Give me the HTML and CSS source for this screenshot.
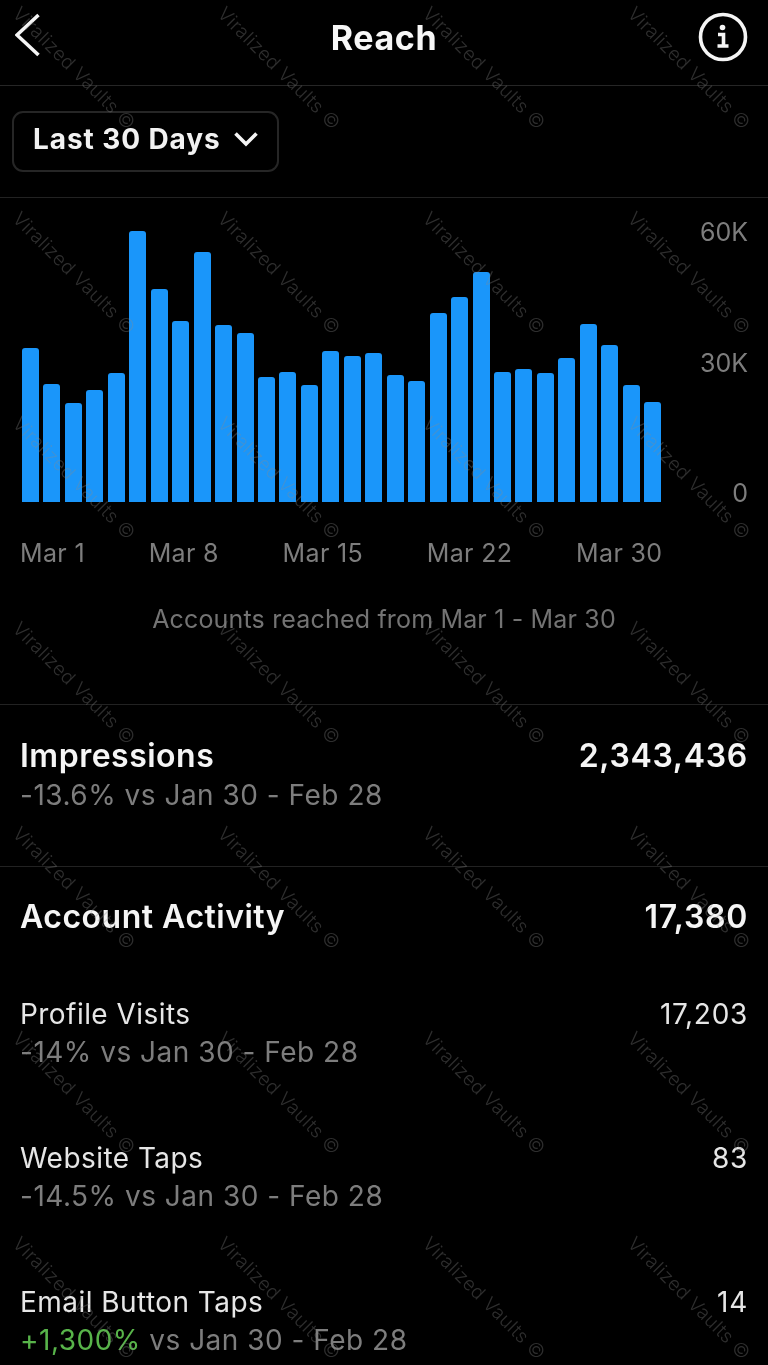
FILE: index.html
```html
<!DOCTYPE html>
<html lang="en">
<head>
<meta charset="utf-8">
<title>Reach</title>
<link rel="stylesheet" href="styles.css">
</head>
<body>
<div class="app">
  <header class="header">
    <svg class="icon back" viewBox="0 0 30 48" width="30" height="48"><path d="M23.500 2 L2 22 L23.500 42"/></svg>
    <h1 class="title">Reach</h1>
    <svg class="icon info" viewBox="0 0 50 50" width="50" height="50"><circle cx="25" cy="25" r="22.500"/><circle class="dot" cx="24.500" cy="15.500" r="2.800"/><path d="M20 22.500 H25.500 V33.500 M19.500 34 H30.500"/></svg>
  </header>
  <section class="filter">
    <button class="range">Last 30 Days<svg class="icon chevron" viewBox="0 0 26 16" width="26" height="16"><path d="M2.500 2.500 L13 13 L23.500 2.500"/></svg></button>
  </section>
  <section class="chart">
    <div class="plot">
      <div class="bars">
        <i class="bar" style="height:154px"></i><i class="bar" style="height:118px"></i><i class="bar" style="height:99px"></i><i class="bar" style="height:112px"></i><i class="bar" style="height:129px"></i><i class="bar" style="height:271px"></i><i class="bar" style="height:213px"></i><i class="bar" style="height:181px"></i><i class="bar" style="height:250px"></i><i class="bar" style="height:177px"></i><i class="bar" style="height:169px"></i><i class="bar" style="height:125px"></i><i class="bar" style="height:130px"></i><i class="bar" style="height:117px"></i><i class="bar" style="height:151px"></i><i class="bar" style="height:146px"></i><i class="bar" style="height:149px"></i><i class="bar" style="height:127px"></i><i class="bar" style="height:121px"></i><i class="bar" style="height:189px"></i><i class="bar" style="height:205px"></i><i class="bar" style="height:230px"></i><i class="bar" style="height:130px"></i><i class="bar" style="height:133px"></i><i class="bar" style="height:129px"></i><i class="bar" style="height:144px"></i><i class="bar" style="height:178px"></i><i class="bar" style="height:157px"></i><i class="bar" style="height:117px"></i><i class="bar" style="height:100px"></i>
      </div>
      <div class="yaxis"><span>60K</span><span>30K</span><span>0</span></div>
    </div>
    <div class="xaxis"><span>Mar 1</span><span>Mar 8</span><span>Mar 15</span><span>Mar 22</span><span>Mar 30</span></div>
    <p class="caption">Accounts reached from Mar 1 - Mar 30</p>
  </section>
  <section class="impressions">
    <div class="row"><span class="heading">Impressions</span><span class="heading value">2,343,436</span></div>
    <p class="sub">-13.6% vs Jan 30 - Feb 28</p>
  </section>
  <section class="activity">
    <div class="row"><span class="heading">Account Activity</span><span class="heading value">17,380</span></div>
    <div class="metric">
      <div class="row"><span class="label">Profile Visits</span><span class="label value">17,203</span></div>
      <p class="sub">-14% vs Jan 30 - Feb 28</p>
    </div>
    <div class="metric">
      <div class="row"><span class="label">Website Taps</span><span class="label value">83</span></div>
      <p class="sub">-14.5% vs Jan 30 - Feb 28</p>
    </div>
    <div class="metric">
      <div class="row"><span class="label">Email Button Taps</span><span class="label value">14</span></div>
      <p class="sub"><span class="up">+1,300%</span> vs Jan 30 - Feb 28</p>
    </div>
  </section>
  <div class="marks" aria-hidden="true">
    <span>Viralized Vaults ©</span><span>Viralized Vaults ©</span><span>Viralized Vaults ©</span><span>Viralized Vaults ©</span>
    <span>Viralized Vaults ©</span><span>Viralized Vaults ©</span><span>Viralized Vaults ©</span><span>Viralized Vaults ©</span>
    <span>Viralized Vaults ©</span><span>Viralized Vaults ©</span><span>Viralized Vaults ©</span><span>Viralized Vaults ©</span>
    <span>Viralized Vaults ©</span><span>Viralized Vaults ©</span><span>Viralized Vaults ©</span><span>Viralized Vaults ©</span>
    <span>Viralized Vaults ©</span><span>Viralized Vaults ©</span><span>Viralized Vaults ©</span><span>Viralized Vaults ©</span>
    <span>Viralized Vaults ©</span><span>Viralized Vaults ©</span><span>Viralized Vaults ©</span><span>Viralized Vaults ©</span>
    <span>Viralized Vaults ©</span><span>Viralized Vaults ©</span><span>Viralized Vaults ©</span><span>Viralized Vaults ©</span>
  </div>
</div>
</body>
</html>
```
FILE: styles.css
```css
* { box-sizing: border-box; }
html, body { margin: 0; padding: 0; background: #000; }
.app {
  position: relative;
  width: 768px;
  height: 1365px;
  overflow: hidden;
  background: #000;
  color: #f2f2f2;
  font-family: Inter, "Liberation Sans", sans-serif;
  filter: blur(0.45px);
}
.icon { display: block; fill: none; stroke: #f5f5f5; stroke-width: 3.6; }
.icon .dot { fill: #f5f5f5; stroke: none; }
.header {
  display: grid;
  grid-template-columns: 1fr auto 1fr;
  align-items: center;
  height: 86px;
  padding: 0 20px 9px;
  border-bottom: 1px solid #262626;
}
.back { width: 30px; margin: 0 0 2px -5px; }
.info { justify-self: end; margin-bottom: 2px; }
.title { margin: 0; font-size: 34px; font-weight: 650; letter-spacing: 0.6px; line-height: 40px; color: #f7f7f7; }
.filter { height: 112px; padding: 25px 12px; border-bottom: 1px solid #222; }
.range {
  display: flex;
  align-items: center;
  gap: 12px;
  width: 267px;
  height: 61px;
  padding: 0 0 5px 19px;
  background: transparent;
  border: 2px solid #262626;
  border-radius: 11px;
  color: #f2f2f2;
  font: 650 28px Inter, "Liberation Sans", sans-serif;
  letter-spacing: 0.9px;
}
.chart { height: 507px; padding-top: 20px; border-bottom: 1px solid #222; }
.plot { display: flex; align-items: flex-start; padding: 0 20px 0 22px; }
.bars { display: flex; align-items: flex-end; justify-content: space-between; width: 639.500px; height: 284px; margin-right: auto; }
.bar { display: block; width: 17px; background: #1a96fa; border-radius: 3px 3px 0 0; }
.yaxis { display: flex; flex-direction: column; justify-content: space-between; align-items: flex-end; height: 289px; color: #7d7d7d; font-size: 25px; line-height: 28px; }
.xaxis { display: flex; justify-content: space-between; width: 662.500px; margin-top: 32px; padding-left: 20px; color: #7d7d7d; font-size: 25px; letter-spacing: 0.35px; line-height: 28px; }
.caption { margin: 38px 0 0; text-align: center; color: #737373; font-size: 25px; letter-spacing: 0.17px; line-height: 28px; }
.row { display: flex; justify-content: space-between; padding: 0 20px; }
.heading { font-size: 32px; font-weight: 600; letter-spacing: 0.5px; line-height: 36px; color: #f5f5f5; }
.label { font-size: 28px; letter-spacing: 0.45px; line-height: 32px; color: #e6e6e6; }
.value { letter-spacing: 0.7px; }
.sub { margin: 0; padding: 0 20px; font-size: 28px; letter-spacing: 0.5px; line-height: 32px; color: #7d7d7d; }
.up { color: #58b44a; }
.impressions { height: 162px; padding-top: 33px; border-bottom: 1px solid #222; }
.impressions .sub { margin-top: 5px; }
.activity { padding-top: 32px; }
.row + .metric { margin-top: 63px; }
.metric { height: 144px; }
.metric .sub { margin-top: 6px; }
.marks {
  position: absolute;
  left: -28px;
  top: -34px;
  display: grid;
  grid-template-columns: repeat(4, 205px);
  grid-auto-rows: 205px;
  pointer-events: none;
}
.marks span {
  place-self: center;
  white-space: nowrap;
  transform: rotate(45deg);
  color: rgba(140, 140, 140, 0.33);
  font-size: 19px;
  font-weight: 300;
  letter-spacing: 0.4px;
}
```
